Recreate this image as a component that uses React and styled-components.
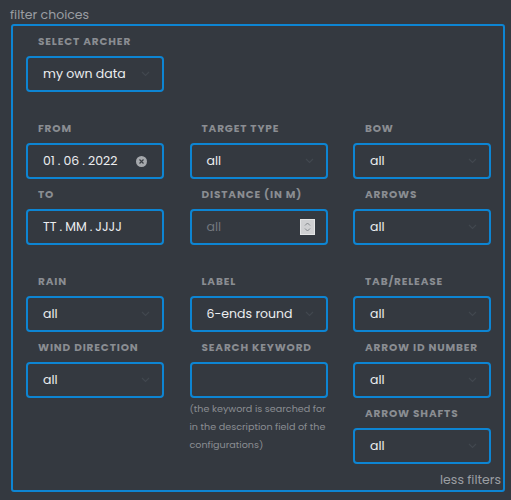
import React from 'react';
import styled, { createGlobalStyle } from 'styled-components';

const Global = createGlobalStyle`
  html, body {
    margin: 0;
    background: #343940;
  }
  body {
    font-family: Poppins, "Open Sans", "DejaVu Sans", sans-serif;
  }
`;

const Page = styled.div`
  width: 511px;
  height: 500px;
  box-sizing: border-box;
  padding: 6px 6px 0 11px;
  background: #343940;
`;

const Title = styled.div`
  font-size: 12.5px;
  line-height: 18px;
  color: #9b9ea3;
  margin-left: -1px;
`;

const Panel = styled.div`
  width: 494px;
  height: 468px;
  box-sizing: border-box;
  border: 2px solid #0d85d3;
  border-radius: 3px;
  padding: 9px 2px 0 13px;
  display: flex;
  flex-direction: column;
`;

const Sections = styled.div`
  display: flex;
  flex-direction: column;
  gap: 30px;
`;

const Section = styled.div`
  display: grid;
  grid-template-columns: repeat(3, 138px);
  column-gap: 25.5px;
`;

const Column = styled.div`
  display: flex;
  flex-direction: column;
  gap: 9px;
`;

const Field = styled.div`
  display: flex;
  flex-direction: column;
`;

const Label = styled.div`
  font-family: Poppins, "Open Sans", sans-serif;
  font-weight: 700;
  font-size: 10.5px;
  line-height: 14px;
  letter-spacing: 0.85px;
  text-transform: uppercase;
  color: #8a8d92;
  padding-left: 12px;
  margin-bottom: 7px;
  white-space: nowrap;
`;

const Box = styled.div`
  height: 36px;
  box-sizing: border-box;
  border: 2px solid #0d85d3;
  border-radius: 4px;
  display: flex;
  align-items: center;
  justify-content: space-between;
  padding: 0 12px 0 15px;
  font-size: 12.5px;
  color: ${(p) => (p.$placeholder ? '#72777e' : '#eceef0')};
`;

const Value = styled.span`
  white-space: nowrap;
`;

const Dot = styled.span`
  margin: 0 3px;
`;

const Clear = styled.span`
  width: 11px;
  height: 11px;
  border-radius: 50%;
  background: #a5a8ac;
  display: grid;
  place-items: center;
  margin-right: 3px;
`;

const Spinner = styled.span`
  width: 15px;
  height: 16px;
  box-sizing: border-box;
  background: #cfd0d2;
  border: 1px solid #e4e5e6;
  display: grid;
  place-items: center;
  margin-right: -1px;
`;

const Help = styled.p`
  margin: 2px 0 0 0;
  font-size: 9.6px;
  line-height: 18px;
  color: #8a8d92;
`;

const Footer = styled.div`
  margin-top: auto;
  text-align: right;
  font-size: 12.5px;
  line-height: 18px;
  color: #9b9ea3;
  padding-bottom: 1px;
`;

const Chevron = () => (
  <svg width="9" height="6" viewBox="0 0 9 6" fill="none">
    <path d="M1 1l3.5 3.5L8 1" stroke="#42484f" strokeWidth="1.1" />
  </svg>
);

const DateValue = ({ parts }) => (
  <Value>
    {parts.map((p, i) => (
      <React.Fragment key={i}>
        {i > 0 && <Dot>.</Dot>}
        {p}
      </React.Fragment>
    ))}
  </Value>
);

const Select = ({ label, value }) => (
  <Field>
    <Label>{label}</Label>
    <Box>
      <Value>{value}</Value>
      <Chevron />
    </Box>
  </Field>
);

const App = () => {
  return (
    <Page>
      <Global />
      <Title>filter choices</Title>
      <Panel>
        <Sections>
          <Section>
            <Column>
              <Select label="Select Archer" value="my own data" />
            </Column>
          </Section>

          <Section>
            <Column>
              <Field>
                <Label>From</Label>
                <Box>
                  <DateValue parts={['01', '06', '2022']} />
                  <Clear>
                    <svg width="5" height="5" viewBox="0 0 5 5">
                      <path d="M0.5 0.5l4 4M4.5 0.5l-4 4" stroke="#3a3e44" strokeWidth="1.2" />
                    </svg>
                  </Clear>
                </Box>
              </Field>
              <Field>
                <Label>To</Label>
                <Box>
                  <DateValue parts={['TT', 'MM', 'JJJJ']} />
                </Box>
              </Field>
            </Column>
            <Column>
              <Select label="Target Type" value="all" />
              <Field>
                <Label>Distance (in m)</Label>
                <Box $placeholder>
                  <Value>all</Value>
                  <Spinner>
                    <svg width="7" height="12" viewBox="0 0 7 12" fill="none">
                      <path d="M1 4.5l2.5-2.5L6 4.5M1 7.5l2.5 2.5L6 7.5" stroke="#7c7f84" strokeWidth="0.9" />
                    </svg>
                  </Spinner>
                </Box>
              </Field>
            </Column>
            <Column>
              <Select label="Bow" value="all" />
              <Select label="Arrows" value="all" />
            </Column>
          </Section>

          <Section>
            <Column>
              <Select label="Rain" value="all" />
              <Select label="Wind Direction" value="all" />
            </Column>
            <Column>
              <Select label="Label" value="6-ends round" />
              <Field>
                <Label>Search Keyword</Label>
                <Box />
                <Help>
                  (the keyword is searched for in the description field of the configurations)
                </Help>
              </Field>
            </Column>
            <Column>
              <Select label="Tab/Release" value="all" />
              <Select label="Arrow ID Number" value="all" />
              <Select label="Arrow Shafts" value="all" />
            </Column>
          </Section>
        </Sections>

        <Footer>less filters</Footer>
      </Panel>
    </Page>
  );
};

export default App;
